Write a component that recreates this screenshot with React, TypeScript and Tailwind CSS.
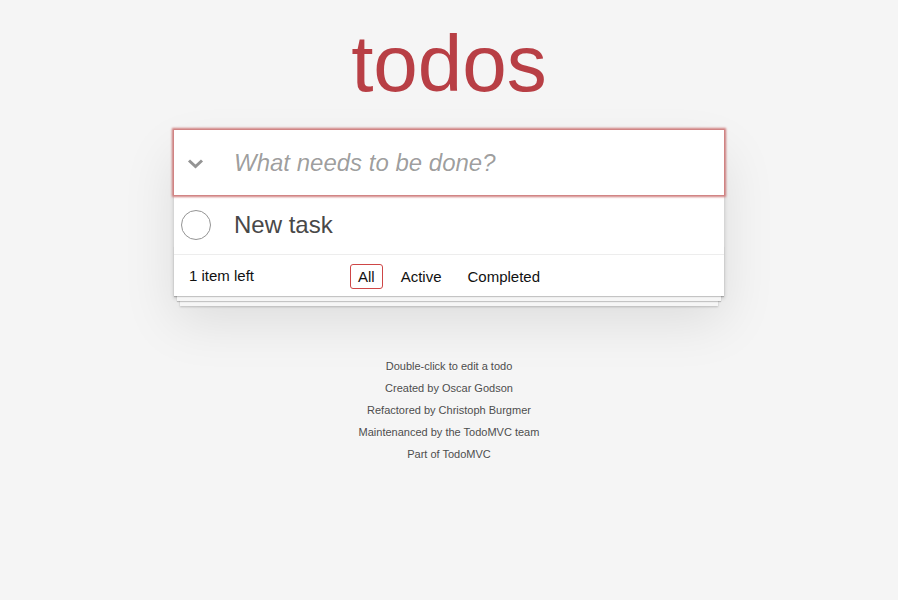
import React from "react";

const footerLines = [
  "Double-click to edit a todo",
  "Created by Oscar Godson",
  "Refactored by Christoph Burgmer",
  "Maintenanced by the TodoMVC team",
  "Part of TodoMVC",
];

const App: React.FC = () => {
  return (
    <div className="min-h-screen bg-[#f5f5f5] pt-[24px] font-['Liberation_Sans',Arial,sans-serif] text-[14px] leading-[19.6px] font-light text-[#111]">
      <div className="mx-auto min-w-[230px] max-w-[550px]">
        {/* Title */}
        <h1 className="mb-[26px] text-center text-[80px] leading-[80px] font-extralight text-[#b83f45]">
          todos
        </h1>

        <section className="relative bg-white shadow-[0_2px_4px_0_rgba(0,0,0,0.2),0_25px_50px_0_rgba(0,0,0,0.1)]">
          {/* New todo input */}
          <header className="relative z-10 flex h-[65px] items-center bg-white shadow-[0_0_2px_2px_#CF7D7D]">
            <div className="flex w-[60px] shrink-0 items-center pl-[13px] pt-[1px]">
              <svg width="17" height="11" viewBox="0 0 17 11" fill="none">
                <path d="M2 2.5 L8.5 8.5 L15 2.5" stroke="#949494" strokeWidth="3" />
              </svg>
            </div>
            <input
              type="text"
              placeholder="What needs to be done?"
              className="h-full flex-1 bg-transparent py-4 pr-4 text-[24px] leading-[1.4em] text-[#484848] outline-none placeholder:font-normal placeholder:italic placeholder:text-black/40"
            />
          </header>

          {/* Todo list */}
          <ul>
            <li className="flex h-[60px] items-center border-b border-[#ededed] pt-[1px] text-[24px]">
              <div className="flex w-[60px] shrink-0 items-center pl-[7px]">
                <span className="h-[30px] w-[30px] rounded-full border border-[#949494]" />
              </div>
              <label className="block leading-[1.2] font-normal text-[#484848]">New task</label>
            </li>
          </ul>

          {/* Footer */}
          <footer className="relative grid h-[41px] grid-cols-[1fr_auto_1fr] items-center px-[15px] pt-[1px] text-[15px] font-normal">
            <div className="pointer-events-none absolute inset-x-0 bottom-0 h-[50px] overflow-hidden shadow-[0_1px_1px_rgba(0,0,0,0.2),0_8px_0_-3px_#f6f6f6,0_9px_1px_-3px_rgba(0,0,0,0.2),0_16px_0_-6px_#f6f6f6,0_17px_2px_-6px_rgba(0,0,0,0.2)]" />
            <span className="relative text-left">1 item left</span>
            <ul className="relative flex items-center gap-[4px]">
              <li>
                <a className="m-[3px] inline-block rounded-[3px] border border-[#CE4646] px-[7px] py-[3px] leading-[17px]">
                  All
                </a>
              </li>
              <li>
                <a className="m-[3px] inline-block rounded-[3px] border border-transparent px-[7px] py-[3px] leading-[17px]">
                  Active
                </a>
              </li>
              <li>
                <a className="m-[3px] inline-block rounded-[3px] border border-transparent px-[7px] py-[3px] leading-[17px]">
                  Completed
                </a>
              </li>
            </ul>
            <span />
          </footer>
        </section>

        {/* Info */}
        <footer className="mt-[65px] flex flex-col gap-[11px] text-center text-[11px] leading-none font-normal text-[#4d4d4d] [text-shadow:0_1px_0_rgba(255,255,255,0.5)]">
          {footerLines.map((line) => (
            <p key={line}>{line}</p>
          ))}
        </footer>
      </div>
    </div>
  );
};

export default App;
